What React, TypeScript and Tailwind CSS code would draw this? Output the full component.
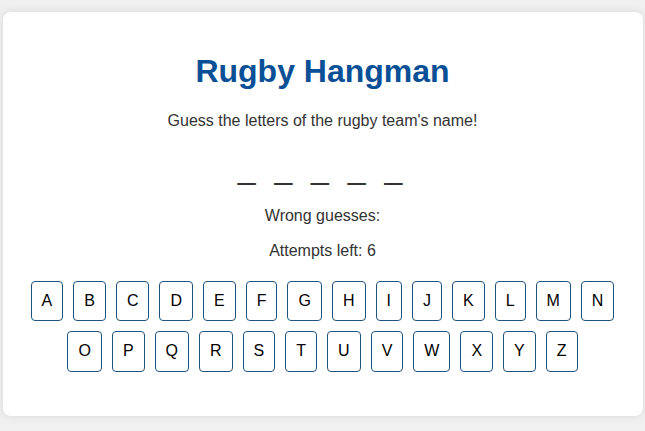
import React from "react";

const row1 = "ABCDEFGHIJKLMN".split("");
const row2 = "OPQRSTUVWXYZ".split("");

function Key({ l }: { l: string }) {
  return (
    <button className="px-[10px] py-[10px] text-[16px] leading-[1.15] text-black bg-white border border-[#1f5380] rounded-[4px] cursor-pointer">
      {l}
    </button>
  );
}

export default function App() {
  return (
    <div className="min-h-screen bg-[#f0f0f0] pt-[12px] font-['Liberation_Sans',Arial,sans-serif] text-[#333]">
      <div className="mx-auto w-[640px] bg-white rounded-[8px] shadow-[0_0_10px_rgba(0,0,0,0.1)] px-[20px] pt-[20px] pb-[44px] text-center">
        <h1 className="mt-[21.44px] mb-[21.44px] text-[32px] leading-[37px] font-bold text-[#0a5096]">
          Rugby Hangman
        </h1>
        <p className="text-[16px] leading-[18.4px]">Guess the letters of the rugby team's name!</p>
        <div className="mt-[20px] mb-[20px] text-[32px] leading-[37px] tracking-[5px]">_ _ _ _ _</div>
        <p className="text-[16px] leading-[18.4px]">Wrong guesses: </p>
        <p className="mt-[16px] text-[16px] leading-[18.4px]">Attempts left: 6</p>
        <div className="mt-[21px] flex flex-col gap-[10px]">
          <div className="flex justify-center gap-[10px]">
            {row1.map((l) => (
              <Key key={l} l={l} />
            ))}
          </div>
          <div className="flex justify-center gap-[10px]">
            {row2.map((l) => (
              <Key key={l} l={l} />
            ))}
          </div>
        </div>
      </div>
    </div>
  );
}
